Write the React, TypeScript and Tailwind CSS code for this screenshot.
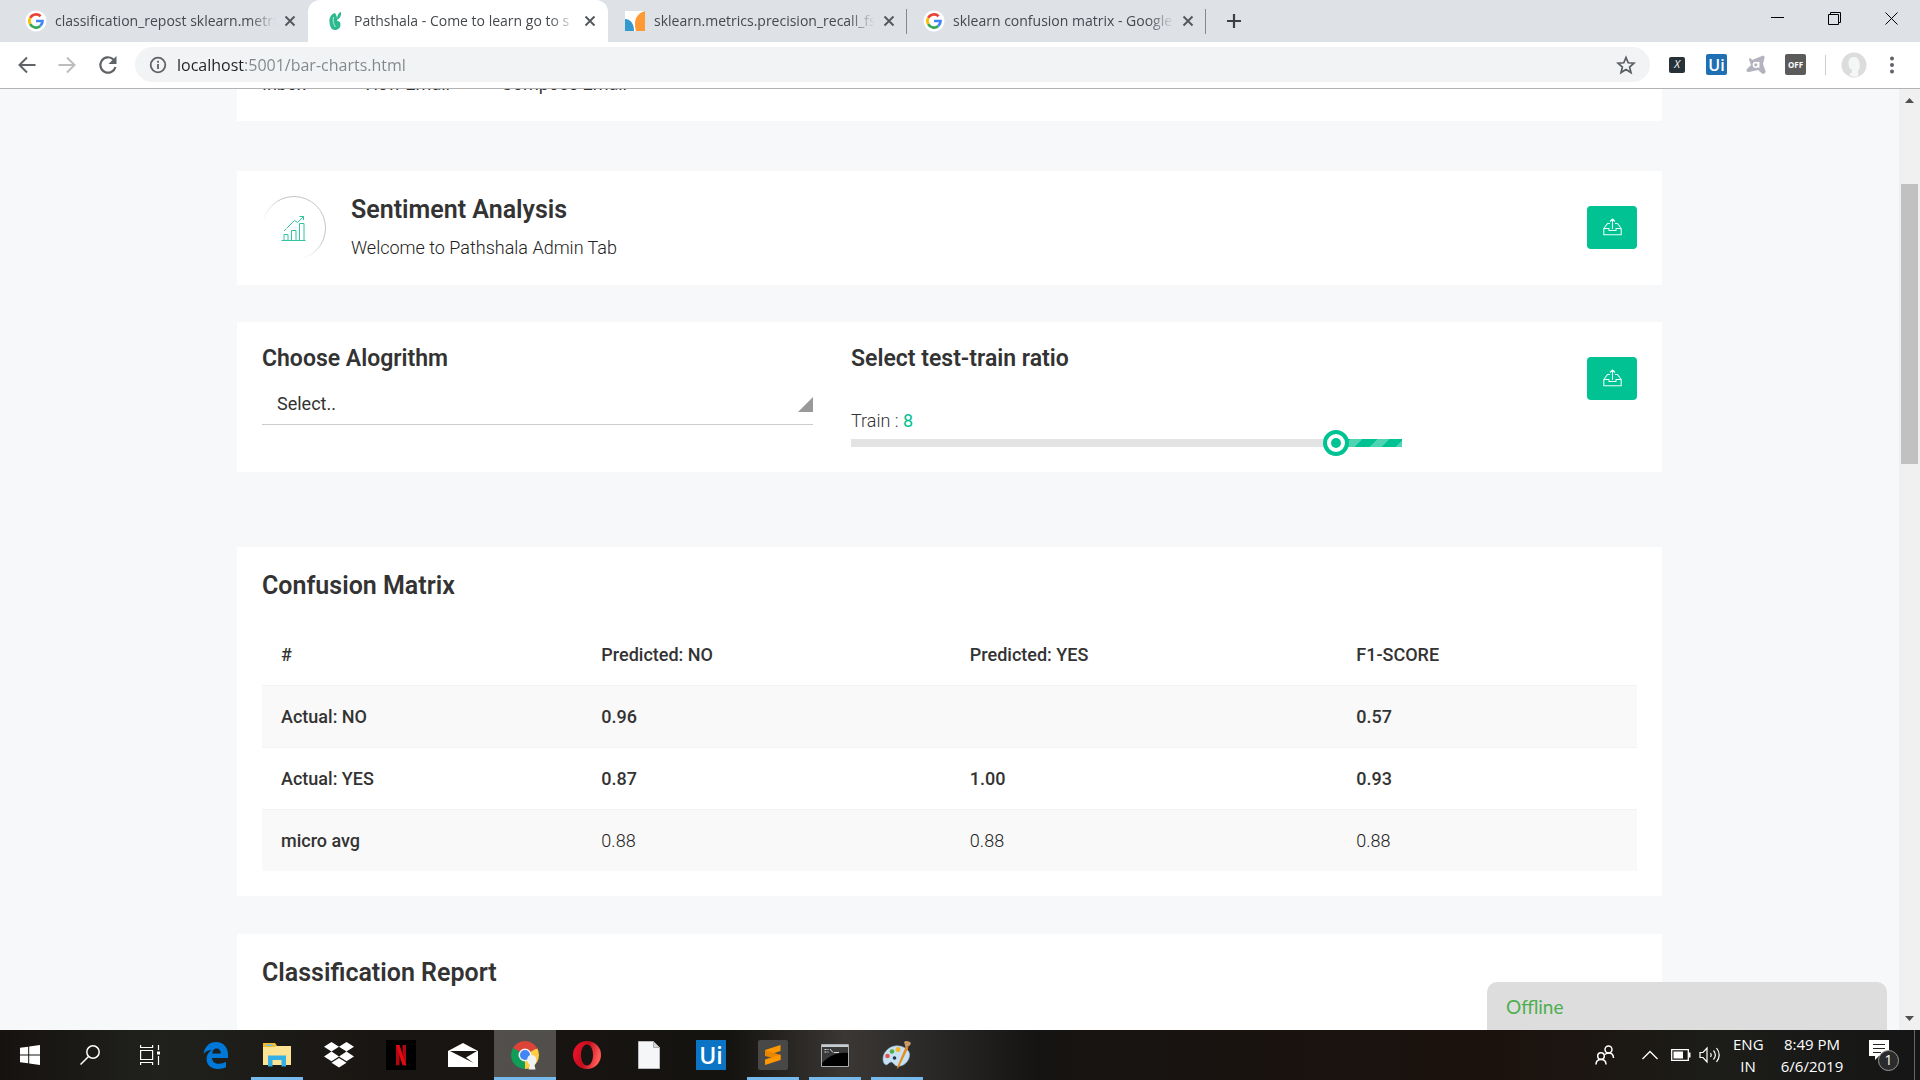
import { useState } from "react";
import type { ReactNode } from "react";

const pageFont = "font-['Roboto',sans-serif]";
const systemFont = "font-['Open_Sans','Noto_Sans',sans-serif]";

/* ---------- Browser icons ---------- */

function GoogleIcon() {
  return (
    <svg viewBox="0 0 24 24" className="size-6 shrink-0" aria-hidden="true">
      <circle cx="12" cy="12" r="10.5" fill="#fff" />
      <g fill="none" strokeWidth="2.7">
        <path d="M16.6 7.2A6.6 6.6 0 0 0 6.2 8.9" stroke="#ea4335" />
        <path d="M6.2 8.9a6.6 6.6 0 0 0 0 6.2" stroke="#fbbc05" />
        <path d="M6.2 15.1a6.6 6.6 0 0 0 10 2" stroke="#34a853" />
        <path d="M16.2 17.1A6.6 6.6 0 0 0 18.5 12H12" stroke="#4285f4" />
      </g>
    </svg>
  );
}

function LeafIcon() {
  return (
    <svg viewBox="0 0 20 20" className="size-5 shrink-0" aria-hidden="true">
      <path d="M10 2C6 3 4 7 4.500 11c.3 4.500 2 8 5.500 8 3.300 0 5.500-2.300 5.500-5.500 0-2.700-1.700-3.800-3.500-3.500C12.500 7 11.500 4 10 2z" fill="#2cb98f" />
      <path d="M12 9c0-4 1-7 4-8 .3 3-.5 6-4 8z" fill="#2cb98f" />
      <path d="M8.500 6c-1 4 0 7 2 10" stroke="#d9f4ea" strokeWidth=".8" fill="none" />
    </svg>
  );
}

function SklearnIcon() {
  return (
    <svg viewBox="0 0 20 20" className="size-5 shrink-0" aria-hidden="true">
      <path d="M0 0h20v20H0z" fill="#fff" />
      <path d="M0 8c5 0 9 4 9 12H0z" fill="#3499cd" />
      <path d="M20 0C13 2 10 7 10 13c0 3 .5 5.500 1 7h9z" fill="#ff9933" />
    </svg>
  );
}

function CloseIcon() {
  return (
    <svg viewBox="0 0 12 12" className="size-3" aria-hidden="true">
      <path d="M1.500 1.500l9 9m0-9l-9 9" stroke="#54575b" strokeWidth="1.900" />
    </svg>
  );
}

type TabProps = { icon: ReactNode; title: string; active?: boolean; divider?: boolean };

function BrowserTab({ icon, title, active, divider }: TabProps) {
  return (
    <div
      className={
        active
          ? "relative flex h-[42px] w-[300px] items-center rounded-t-xl bg-white pr-1 pl-[15px]"
          : "relative flex h-[42px] w-[299px] items-center pr-1 pl-[15px]"
      }
    >
      <button className="flex min-w-0 flex-1 items-center gap-[7px] overflow-hidden">
        <span className="flex w-6 shrink-0 justify-center">{icon}</span>
        <span className="flex-1 overflow-hidden text-left text-sm leading-5 whitespace-nowrap text-[#45494d] [mask-image:linear-gradient(to_right,black_88%,transparent)]">
          {title}
        </span>
      </button>
      <button aria-label={"Close " + title} className="flex w-7 shrink-0 justify-center">
        <CloseIcon />
      </button>
      {divider && <span className="absolute top-[9px] right-0 h-[25px] w-px bg-[#85888c]" />}
    </div>
  );
}

function TabStrip() {
  return (
    <div className="flex h-[42px] bg-[#dee1e6] pl-[9px]">
      <BrowserTab icon={<GoogleIcon />} title="classification_repost sklearn.metri" />
      <BrowserTab icon={<LeafIcon />} title="Pathshala - Come to learn go to s" active />
      <BrowserTab icon={<SklearnIcon />} title="sklearn.metrics.precision_recall_fs" divider />
      <BrowserTab icon={<GoogleIcon />} title="sklearn confusion matrix - Google" divider />
      <button aria-label="New tab" className="ml-5 flex items-center">
        <svg viewBox="0 0 16 16" className="size-4" aria-hidden="true">
          <path d="M8 1v14M1 8h14" stroke="#3c4043" strokeWidth="2.200" />
        </svg>
      </button>
      <div className="ml-auto flex">
        <button aria-label="Minimize" className="flex h-9 w-[57px] items-center justify-center">
          <svg viewBox="0 0 13 13" className="size-[13px]" aria-hidden="true">
            <path d="M0 5.500h13" stroke="#000" />
          </svg>
        </button>
        <button aria-label="Restore" className="flex h-9 w-[57px] items-center justify-center">
          <svg viewBox="0 0 13 13" className="size-[13px]" aria-hidden="true">
            <path d="M.5 2.500h10v10H.5zM2.500 2.500v-2h10v10h-2" fill="none" stroke="#000" />
          </svg>
        </button>
        <button aria-label="Close window" className="flex h-9 w-[57px] items-center justify-center">
          <svg viewBox="0 0 13 13" className="size-[13px]" aria-hidden="true">
            <path d="M.5.5l12 12m0-12l-12 12" stroke="#000" />
          </svg>
        </button>
      </div>
    </div>
  );
}

function Toolbar() {
  return (
    <div className="flex h-[47px] items-center border-b border-[#b3b3b3] bg-white pr-6 pb-px pl-[18px]">
      <div className="flex items-center gap-[22px]">
        <button aria-label="Back">
          <svg viewBox="0 0 18 18" className="size-[18px]" fill="none" stroke="#5f6368" strokeWidth="2" aria-hidden="true">
            <path d="M17.500 9H2M9 1.500L1.500 9 9 16.500" />
          </svg>
        </button>
        <button aria-label="Forward">
          <svg viewBox="0 0 18 18" className="size-[18px]" fill="none" stroke="#bbbdbf" strokeWidth="2" aria-hidden="true">
            <path d="M.5 9H16M9 1.500L16.500 9 9 16.500" />
          </svg>
        </button>
        <button aria-label="Reload">
          <svg viewBox="0 0 20 20" className="size-5" aria-hidden="true">
            <path d="M15.500 4.500A7.700 7.700 0 1 0 17.500 12" fill="none" stroke="#5f6368" strokeWidth="2.200" />
            <path d="M18.500 1v8h-8z" fill="#5f6368" />
          </svg>
        </button>
      </div>
      <div className="ml-[17px] flex h-[35px] flex-1 items-center rounded-full bg-[#f1f3f4] pr-3.5 pl-3.5">
        <svg viewBox="0 0 18 18" className="mr-2.5 size-[18px]" fill="none" stroke="#5f6368" strokeWidth="1.800" aria-hidden="true">
          <circle cx="9" cy="9" r="7.300" />
          <path d="M9 8v5M9 4.800v1.900" />
        </svg>
        <input
          aria-label="Address"
          defaultValue="localhost:5001/bar-charts.html"
          className="h-7 flex-1 bg-[linear-gradient(to_right,#202124_67px,#80868b_67px)] bg-clip-text text-base text-transparent outline-none"
        />
        <button aria-label="Bookmark">
          <svg viewBox="0 0 20 20" className="size-5" fill="none" stroke="#5a5d61" strokeWidth="1.700" aria-hidden="true">
            <path d="M10 2.500l2.200 5.300 5.800.4-4.400 3.800 1.400 5.600-5-3-5 3L6.400 12 2 8.200l5.800-.4z" />
          </svg>
        </button>
      </div>
      <div className="ml-[19px] flex items-center gap-[19px]">
        <button aria-label="Extension X" className="flex size-4 items-center justify-center rounded-xs bg-[#263238] text-[11px] text-white italic">
          X
        </button>
        <button aria-label="UiPath extension" className="ml-[2px] flex size-[21px] items-center justify-center rounded-xs bg-[#1f6fb5] text-base leading-5 font-semibold text-white">
          Ui
        </button>
        <button aria-label="Avast extension">
          <svg viewBox="0 0 20 20" className="size-5" aria-hidden="true">
            <path d="M6 5l10-4c1.500-.5 3 .5 2.500 2L17 9l2.500 7c.5 2-2 3.500-3.500 2.500L12 15l-9 2c-2 .5-3.500-1.500-2-3l4-4-2-5.500C2.500 3 5 2.500 6 5z" fill="#b3b3bf" />
            <circle cx="9.800" cy="9.800" r="2.400" fill="none" stroke="#fff" strokeWidth="1.500" />
            <path d="M12.700 6.800v5.800" stroke="#fff" strokeWidth="1.500" />
          </svg>
        </button>
        <button aria-label="Extension off" className="flex size-[21px] items-center justify-center rounded-xs bg-[#5b5b5b] text-[8px] font-bold text-white">
          OFF
        </button>
        <span className="-mr-1 h-5 w-px bg-[#cbcdd0]" />
        <button aria-label="Profile">
          <svg viewBox="0 0 26 26" className="size-[26px]" aria-hidden="true">
            <circle cx="13" cy="13" r="12.500" fill="#dcdcdc" />
            <path d="M13 5c-4 0-5.500 3-5.500 6.500S9 17 11 18l-.5 2.500L8 23c3 2 7 2 9.500 1l-.5-5c2-2 2-5 1.500-8.500C18 7 16 5 13 5z" fill="#f4f7f8" />
          </svg>
        </button>
        <button aria-label="Menu" className="ml-[2px]">
          <svg viewBox="0 0 8 18" className="h-[18px] w-2" fill="#5f6368" aria-hidden="true">
            <circle cx="4" cy="2.500" r="2" />
            <circle cx="4" cy="9" r="2" />
            <circle cx="4" cy="15.500" r="2" />
          </svg>
        </button>
      </div>
    </div>
  );
}

/* ---------- Page ---------- */

function UploadButton({ label }: { label: string }) {
  return (
    <button aria-label={label} className="flex h-[43px] w-[50px] items-center justify-center rounded-sm bg-[#00c292] pb-0.5">
      <svg viewBox="0 0 19 18" className="h-[18px] w-[19px]" fill="none" stroke="#e6fff8" strokeWidth="1.100" strokeLinejoin="round" aria-hidden="true">
        <path d="M7 5.500H4.500L.8 10.500v6.200h17.400v-6.200l-3.700-5H12M.8 10.500h5.200v2h7v-2h5.200M9.500 11V1M7 3.500L9.500 1 12 3.500" />
      </svg>
    </button>
  );
}

function ChartBadge() {
  return (
    <svg viewBox="0 0 64 64" className="size-16 shrink-0" fill="none" aria-hidden="true">
      <defs>
        <linearGradient id="ring" x1="0.8" y1="0.2" x2="0.2" y2="0.8">
          <stop offset="0.3" stopColor="#c4c4c4" />
          <stop offset="0.8" stopColor="#ffffff" />
        </linearGradient>
      </defs>
      <circle cx="32" cy="32" r="31.500" stroke="url(#ring)" />
      <g stroke="#2fc5a0" strokeWidth="1">
        <path d="M19.500 44.500h24M22 44.500v-6h4v6M29.500 44.500v-10h4.500v10M37.500 44.500v-17h4.500v17" />
        <path d="M22 35l2-2M24.500 32.500l8-8 3 2L41.500 20.500M37.500 20.500H41.500V24" />
      </g>
    </svg>
  );
}

const columns = ["#", "Predicted: NO", "Predicted: YES", "F1-SCORE"];
const rows = [
  { label: "Actual: NO", values: ["0.96", "", "0.57"], strong: true },
  { label: "Actual: YES", values: ["0.87", "1.00", "0.93"], strong: true },
  { label: "micro avg", values: ["0.88", "0.88", "0.88"], strong: false },
];

function ConfusionMatrix() {
  return (
    <section className="mt-[75px] bg-white px-[25px] pt-[23px] pb-[25px]">
      <h2 className="text-[25px] leading-8 font-semibold">Confusion Matrix</h2>
      <table className="mt-[21px] w-full table-fixed text-left text-lg leading-6">
        <colgroup>
          <col className="w-[23.3%]" />
          <col className="w-[26.8%]" />
          <col className="w-[28.1%]" />
          <col />
        </colgroup>
        <thead>
          <tr>
            {columns.map((c) => (
              <th key={c} className="h-[62px] px-[19px] pt-0.5 font-medium">{c}</th>
            ))}
          </tr>
        </thead>
        <tbody>
          {rows.map((r) => (
            <tr key={r.label} className="border-t border-[#f3f3f3] odd:bg-[#f9f9f9]">
              <th scope="row" className="h-[62px] px-[19px] pt-0.5 font-medium">{r.label}</th>
              {r.values.map((v, i) => (
                <td key={i} className={r.strong ? "px-[19px] pt-0.5 font-medium" : "px-[19px] pt-0.5 font-light text-[#222]"}>
                  {v}
                </td>
              ))}
            </tr>
          ))}
        </tbody>
      </table>
    </section>
  );
}

function RatioSlider() {
  const [train, setTrain] = useState(8);
  return (
    <div>
      <label htmlFor="train" className="block leading-6 font-light">
        Train : <span className="font-normal text-[#00c292]">{train}</span>
      </label>
      <div className="relative mt-1.5 h-2 bg-[#e3e3e3]">
        <div className="absolute inset-y-0 right-0 left-[88%] bg-[repeating-linear-gradient(135deg,#00c292_0_10px,#4dd4b3_10px_19px)]" />
        <span className="absolute top-1/2 left-[88%] flex size-[26px] -translate-1/2 items-center justify-center rounded-full border-4 border-[#00c292] bg-white">
          <span className="size-2.5 rounded-full bg-[#00c292]" />
        </span>
        <input
          id="train"
          type="range"
          min="1"
          max="9"
          value={train}
          onChange={(e) => setTrain(Number(e.target.value))}
          className="absolute inset-x-0 -top-2 h-6 w-full cursor-pointer opacity-0"
        />
      </div>
    </div>
  );
}

function Page() {
  return (
    <div className={"relative flex min-h-0 flex-1 overflow-hidden bg-[#f6f8fa] text-[#333] " + pageFont}>
      <main className="min-w-0 flex-1 overflow-hidden">
        <div className="mx-auto max-w-[1425px]">
          <nav className="-mt-[15px] flex h-[47px] bg-white px-[25px] text-lg leading-5">
            <a href="#inbox" className="w-[100px]">Inbox</a>
            <a href="#view" className="w-[139px]">View Email</a>
            <a href="#compose">Compose Email</a>
          </nav>

          <section className="mt-[50px] flex bg-white p-[25px]">
            <ChartBadge />
            <div className="ml-[25px]">
              <h2 className="text-[25px] leading-7 font-semibold">Sentiment Analysis</h2>
              <p className="mt-3 text-lg leading-6 font-light text-[#222]">Welcome to Pathshala Admin Tab</p>
            </div>
            <div className="ml-auto pt-2.5">
              <UploadButton label="Upload dataset" />
            </div>
          </section>

          <section className="mt-[37px] flex bg-white px-[25px] pb-[25px]">
            <div className="flex flex-1 gap-[38px] pt-[23px]">
              <div className="max-w-[551px] flex-1">
                <label htmlFor="algorithm" className="block text-[23px] leading-7 font-semibold">Choose Alogrithm</label>
                <div className="relative mt-2.5 border-b border-[#ccc]">
                  <select id="algorithm" className="h-[41px] w-full appearance-none bg-transparent px-[15px] text-lg outline-none">
                    <option>Select..</option>
                  </select>
                  <svg viewBox="0 0 15 15" className="pointer-events-none absolute right-0 bottom-3 size-[15px]" aria-hidden="true">
                    <path d="M15 0v15H0z" fill="#999" />
                  </svg>
                </div>
              </div>
              <div className="max-w-[551px] flex-1 text-lg">
                <h2 className="mb-9 text-[23px] leading-7 font-semibold">Select test-train ratio</h2>
                <RatioSlider />
              </div>
            </div>
            <div className="pt-[35px]">
              <UploadButton label="Run with ratio" />
            </div>
          </section>

          <ConfusionMatrix />

          <section className="mt-[38px] h-60 bg-white px-[25px] pt-[23px]">
            <h2 className="text-[25px] leading-8 font-semibold">Classification Report</h2>
          </section>
        </div>
      </main>

      <div className="relative flex w-[21px] shrink-0 flex-col items-center bg-[#f0f0f0] py-[9px]">
        <svg viewBox="0 0 9 5" className="h-[5px] w-[9px]" aria-hidden="true">
          <path d="M0 5l4.500-5L9 5z" fill="#505050" />
        </svg>
        <div className="mt-[81px] h-[280px] w-[17px] bg-[#c1c1c1]" />
        <svg viewBox="0 0 9 5" className="mt-auto h-[5px] w-[9px]" aria-hidden="true">
          <path d="M0 0h9L4.500 5z" fill="#505050" />
        </svg>
      </div>

      <button className="absolute right-[33px] bottom-0 h-12 w-[400px] rounded-t-[10px] bg-[#ddd] px-[19px] pt-0.5 text-left font-['Lato',sans-serif] text-[19px] text-[#4caf50]">
        Offline
      </button>
    </div>
  );
}

/* ---------- Taskbar ---------- */

type AppProps = { name: string; open?: boolean; active?: boolean; children: ReactNode };

function TaskApp({ name, open, active, children }: AppProps) {
  return (
    <button
      aria-label={name}
      className={
        active
          ? "relative flex h-full w-[62px] items-center justify-center bg-white/25"
          : "relative flex h-full w-[62px] items-center justify-center"
      }
    >
      {children}
      {open && (
        <span className={active ? "absolute inset-x-0 bottom-0 h-[3px] bg-[#76b9ed]" : "absolute inset-x-[5px] bottom-0 h-[3px] bg-[#76b9ed]"} />
      )}
    </button>
  );
}

function Taskbar() {
  return (
    <footer className={"flex h-[50px] shrink-0 items-center bg-[linear-gradient(to_right,#16120f_0,#20211d_8%,#191512_20%,#151310_38%,#3a3735_44%,#302e2c_47%,#161412_54%,#1c120d_78%,#1c1d19_90%,#151515)] text-white " + systemFont}>
      <button aria-label="Start" className="flex w-[60px] justify-center">
        <svg viewBox="0 0 20 20" className="size-5" fill="#fff" aria-hidden="true">
          <path d="M0 2.800L8.200 1.700v7.800H0zM9.200 1.500L20 0v9.500H9.200zM0 10.500h8.200v7.800L0 17.200zM9.200 10.500H20V20L9.200 18.500z" />
        </svg>
      </button>
      <button aria-label="Search" className="flex w-[60px] justify-center">
        <svg viewBox="0 0 20 20" className="size-5" fill="none" stroke="#fff" strokeWidth="1.500" aria-hidden="true">
          <circle cx="13" cy="7" r="6.200" />
          <path d="M8.500 11.500L.5 19.500" />
        </svg>
      </button>
      <button aria-label="Task view" className="flex w-[64px] justify-center">
        <svg viewBox="0 0 20 20" className="mr-1 size-5" fill="none" stroke="#fff" strokeWidth="1.200" aria-hidden="true">
          <path d="M.6 0v2.500h12V0M.6 5.500h12v9H.6zM.6 20v-2.500h12V20M18.500 0v5M18.500 11v9" />
          <path d="M17 6.500h3v3h-3z" fill="#fff" stroke="none" />
        </svg>
      </button>
      <TaskApp name="Edge">
        <svg viewBox="0 0 25 27" className="h-[27px] w-[25px]" aria-hidden="true">
          <path d="M.5 12C1.500 4.500 6.500 0 13 0c7.500 0 12 5.500 12 12.500V16H9c.3 4 3.300 5.800 7 5.800 2.600 0 4.800-.7 7-2v5.500c-2.300 1.200-5 1.700-8 1.700C8 27 3.500 22.800 3.500 17c0-4 2-7.300 5.500-9.300C5.500 8 2.500 9.500.5 12zM9.200 11.500h8.600c0-3-1.500-5-4.300-5-2.500 0-4 2-4.300 5z" fill="#0078d7" />
        </svg>
      </TaskApp>
      <TaskApp name="File Explorer" open>
        <svg viewBox="0 0 28 24" className="h-6 w-7" aria-hidden="true">
          <path d="M0 1h12l2 2h14v19H0z" fill="#ffe394" />
          <path d="M0 0h12l1.500 2L12 4H0z" fill="#f7b928" />
          <path d="M3 1.500h7v1.500H3z" fill="#6cc5ee" />
          <path d="M5 12.500h18v11h-4.500V17h-9v6.500H5z" fill="#33b0e6" />
        </svg>
      </TaskApp>
      <TaskApp name="Dropbox">
        <svg viewBox="0 0 30 26" className="h-[26px] w-[30px]" fill="#fff" aria-hidden="true">
          <path d="M7.500 0L15 4.800 7.500 9.600 0 4.800zM22.500 0L30 4.800l-7.500 4.800L15 4.800zM7.500 9.600l7.500 4.800-7.500 4.800L0 14.400zM22.500 9.600l7.500 4.800-7.500 4.800-7.500-4.800zM15 16l7.500 4.800L15 25.600l-7.500-4.800z" />
        </svg>
      </TaskApp>
      <TaskApp name="Netflix">
        <svg viewBox="0 0 30 30" className="size-[30px]" aria-hidden="true">
          <path d="M0 0h30v30H0z" fill="#000" />
          <path d="M10 5h3.500v20L10 25.500zM16.500 5H20v20.500l-3.500-.5z" fill="#b20710" />
          <path d="M10 5h3.500L20 25.500l-3.500-.5z" fill="#e50914" />
        </svg>
      </TaskApp>
      <TaskApp name="Mail">
        <svg viewBox="0 0 30 24" className="h-6 w-[30px]" aria-hidden="true">
          <path d="M0 8L15 0l15 8v16H0z" fill="#fff" />
          <path d="M2 8h27l-11 6.500L25.500 20z" fill="#171411" />
        </svg>
      </TaskApp>
      <TaskApp name="Chrome" open active>
        <svg viewBox="0 0 30 30" className="size-[30px]" aria-hidden="true">
          <path d="M15 15L2.900 8A14 14 0 0 1 27.100 8z" fill="#db4437" />
          <path d="M15 15V29A14 14 0 0 1 2.900 8z" fill="#0f9d58" />
          <path d="M15 15L27.100 8A14 14 0 0 1 15 29z" fill="#ffcd40" />
          <path d="M15 9h12.600L27 8 15 2z" fill="#db4437" />
          <circle cx="15" cy="15" r="6.500" fill="#f1f1f1" />
          <circle cx="15" cy="15" r="5" fill="#4285f4" />
          <path d="M21.500 15c-3 0-4.500 2-4.200 5 .2 2.500 1.200 4 2.700 5l-1.500 4.500h7L24.500 25c1.500-1.500 2-3.500 1.800-5.500-.2-3-1.800-4.500-4.800-4.500z" fill="#eef2f3" />
        </svg>
      </TaskApp>
      <TaskApp name="Opera">
        <svg viewBox="0 0 30 30" className="size-[30px]" aria-hidden="true">
          <defs>
            <linearGradient id="opera" x1="0" y1="0" x2="1" y2="0.3">
              <stop offset="0" stopColor="#f5142b" />
              <stop offset="0.55" stopColor="#c20d1e" />
              <stop offset="1" stopColor="#ff5a55" />
            </linearGradient>
          </defs>
          <path fillRule="evenodd" d="M15 1a14 14 0 1 0 0 28 14 14 0 0 0 0-28zm0 3.500c3.500 0 6 4.500 6 10.500s-2.500 10.500-6 10.500S9 21 9 15s2.500-10.500 6-10.500z" fill="url(#opera)" />
        </svg>
      </TaskApp>
      <TaskApp name="Document">
        <svg viewBox="0 0 22 28" className="h-7 w-[22px]" aria-hidden="true">
          <path d="M.5.5h15l6 6v21H.5z" fill="#f5f6f7" stroke="#b9bcbe" />
          <path d="M15.500.5v6h6z" fill="#d4d7d9" stroke="#a9acae" />
        </svg>
      </TaskApp>
      <TaskApp name="UiPath">
        <span className="flex size-[30px] items-center justify-center bg-[#0b74c4] text-[23px] leading-none font-semibold">Ui</span>
      </TaskApp>
      <TaskApp name="Sublime Text" open>
        <svg viewBox="0 0 30 30" className="size-[30px]" aria-hidden="true">
          <rect width="30" height="30" rx="2" fill="#484848" />
          <path d="M22.500 5L7 10v6l15.500-5z" fill="#ff9800" />
          <path d="M7 10v6l15.500 4v-5z" fill="#e88600" />
          <path d="M22.500 14.500L7 19.500V25l15.500-5z" fill="#ff9800" />
        </svg>
      </TaskApp>
      <TaskApp name="Command Prompt" open>
        <svg viewBox="0 0 28 23" className="h-[23px] w-7" aria-hidden="true">
          <path d="M.5.5h27v22H.5z" fill="#000" stroke="#a7adb2" />
          <path d="M1 1h26v2H1z" fill="#c8cdd1" />
          <path d="M1 3h26v6C16 8 8 12 1 19z" fill="#3a3a3a" />
          <path d="M3.500 5.500h2M3.500 8h2M7 5v1M7 7.500v1M9 5l3 3.500M13 8.500h5" stroke="#ddd" fill="none" />
        </svg>
      </TaskApp>
      <TaskApp name="Paint" open>
        <svg viewBox="0 0 30 30" className="size-[30px]" aria-hidden="true">
          <path d="M13 6C6 7 1 13 1 19c0 5 3 7 5 5s3-3 5-1 3 4 7 3c6-1 10-7 9.500-12S20 5 13 6z" fill="#c6e2f2" stroke="#8db8d4" strokeWidth=".6" />
          <circle cx="5.500" cy="16" r="2.300" fill="#e4524f" />
          <circle cx="10" cy="11.500" r="2.300" fill="#4fae45" />
          <circle cx="16" cy="9.500" r="2.500" fill="#f4b52c" />
          <circle cx="12.500" cy="18" r="1.800" fill="#223445" />
          <path d="M24 6l2.500 1.500L17 27l-2 2 .5-3z" fill="#e68a22" />
          <path d="M22 2c2-2 5-1 7 1-1 3-3 4-5.500 4z" fill="#c99a6a" />
        </svg>
      </TaskApp>

      <div className="ml-auto flex h-full items-center">
        <button aria-label="People">
          <svg viewBox="0 0 20 20" className="size-5" fill="none" stroke="#fff" strokeWidth="1.500" aria-hidden="true">
            <circle cx="13.500" cy="4.500" r="3.500" />
            <circle cx="6" cy="11" r="3.300" />
            <path d="M1 19.500c0-3 2-5 5-5s5 2 5 5M10 9.500c1-1 2-1.500 3.500-1.500 3 0 5 2 5 5" />
          </svg>
        </button>
        <button aria-label="Show hidden icons" className="ml-[27px]">
          <svg viewBox="0 0 16 10" className="h-2.5 w-4" fill="none" stroke="#fff" strokeWidth="1.300" aria-hidden="true">
            <path d="M.5 9L8 1.500 15.500 9" />
          </svg>
        </button>
        <button aria-label="Battery" className="ml-[13px]">
          <svg viewBox="0 0 20 12" className="h-3 w-5" aria-hidden="true">
            <path d="M.7.7h16.600v10.600H.7z" fill="none" stroke="#fff" strokeWidth="1.300" />
            <path d="M2.500 2.500H12v7H2.500zM18 3.500h1.500v5H18z" fill="#fff" />
          </svg>
        </button>
        <button aria-label="Volume" className="ml-2">
          <svg viewBox="0 0 22 18" className="h-[18px] w-[22px]" fill="none" stroke="#fff" strokeWidth="1.200" aria-hidden="true">
            <path d="M1 6.500h3l4-4.500v14l-4-4.500H1zM11.500 7c1 1.500 1 2.500 0 4M14.500 4.500c2.500 3 2.500 6 0 9M17.500 2c3.500 4.500 3.500 9.500 0 14" />
          </svg>
        </button>
        <button className="ml-3 w-[30px] text-[15px] leading-[22px]">
          ENG
          <br />
          IN
        </button>
        <button className="ml-[15px] w-[68px] text-[15px] leading-[22px] whitespace-nowrap">
          8:49 PM
          <br />
          6/6/2019
        </button>
        <button aria-label="Notifications" className="relative ml-[23px] h-[31px] w-[30px]">
          <svg viewBox="0 0 20 20" className="absolute top-0 left-0 size-5" aria-hidden="true">
            <path d="M0 0h20v16H10l-4 4v-4H0z" fill="#fff" />
            <path d="M4 4.500h12M4 8.500h12M4 12.500h8" stroke="#222" strokeWidth="1.200" />
          </svg>
          <span className="absolute right-0 bottom-0 flex size-[21px] items-center justify-center rounded-full border border-[#999] bg-[#2b2b2b] text-sm">1</span>
        </button>
        <span className="mr-[5px] ml-[15px] h-full w-px bg-[#666]" />
      </div>
    </footer>
  );
}

export default function App() {
  return (
    <div className="flex h-screen flex-col overflow-hidden">
      <header className={systemFont}>
        <TabStrip />
        <Toolbar />
      </header>
      <Page />
      <Taskbar />
    </div>
  );
}
